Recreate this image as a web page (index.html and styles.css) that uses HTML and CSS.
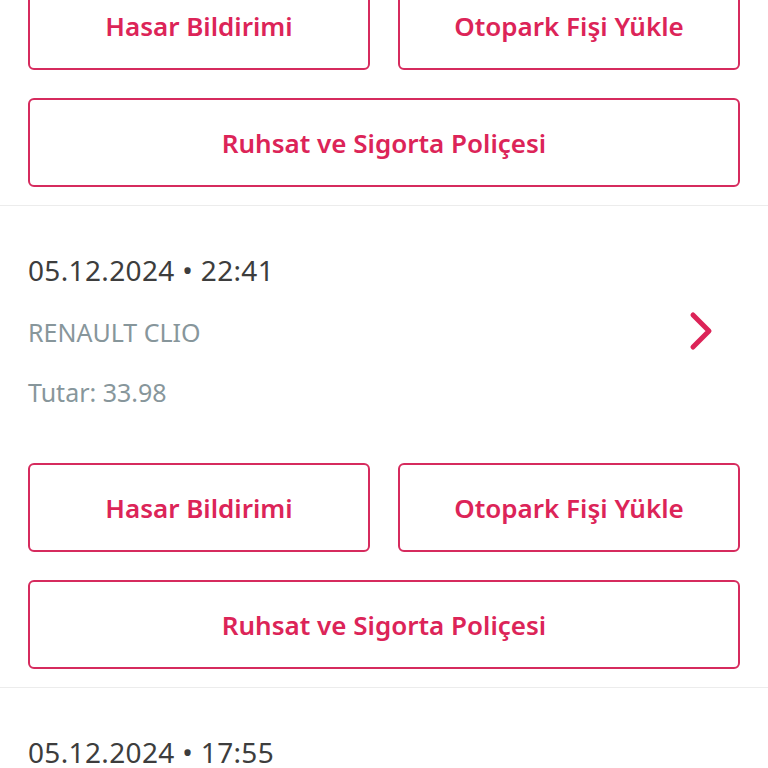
FILE: index.html
```html
<!DOCTYPE html>
<html lang="tr">
<head>
<meta charset="utf-8">
<title>Otopark</title>
<link rel="stylesheet" href="styles.css">
</head>
<body>
<div class="list">
  <section class="item item-partial">
    <div class="actions">
      <div class="row">
        <button class="btn">Hasar Bildirimi</button>
        <button class="btn">Otopark Fişi Yükle</button>
      </div>
      <button class="btn">Ruhsat ve Sigorta Poliçesi</button>
    </div>
  </section>
  <section class="item">
    <div class="head">
      <div class="info">
        <div class="date">05.12.2024 • 22:41</div>
        <div class="car">RENAULT CLIO</div>
        <div class="amount">Tutar: 33.98</div>
      </div>
      <svg class="chev" width="26" height="42" viewBox="0 0 26 42"><path d="M5 5 L21 21 L5 37" fill="none" stroke="#dc2458" stroke-width="5" stroke-linecap="round" stroke-linejoin="round"/></svg>
    </div>
    <div class="actions">
      <div class="row">
        <button class="btn">Hasar Bildirimi</button>
        <button class="btn">Otopark Fişi Yükle</button>
      </div>
      <button class="btn">Ruhsat ve Sigorta Poliçesi</button>
    </div>
  </section>
  <section class="item">
    <div class="head">
      <div class="info">
        <div class="date">05.12.2024 • 17:55</div>
      </div>
    </div>
  </section>
</div>
</body>
</html>
```
FILE: styles.css
```css
html, body {
  margin: 0;
  padding: 0;
  background: #ffffff;
  overflow: hidden;
}
body {
  font-family: "Noto Sans", "Open Sans", sans-serif;
  width: 768px;
  height: 768px;
}
.list {
  display: flex;
  flex-direction: column;
}
.item {
  padding: 48px 28px 18px;
  border-bottom: 1px solid #ececec;
}
.item-partial {
  margin-top: -19px;
  padding-top: 0;
}
.head {
  display: flex;
  align-items: center;
  justify-content: space-between;
  padding-right: 26px;
  margin-bottom: 56px;
}
.info {
  display: flex;
  flex-direction: column;
}
.date {
  font-size: 28px;
  line-height: 32px;
  letter-spacing: 0.35px;
  color: #3d3d3d;
  margin-bottom: 31px;
}
.car, .amount {
  font-size: 25px;
  line-height: 30px;
  color: #87969b;
}
.car {
  margin-bottom: 30px;
}
.actions {
  display: flex;
  flex-direction: column;
  gap: 28px;
}
.row {
  display: grid;
  grid-template-columns: 1fr 1fr;
  gap: 28px;
}
.btn {
  height: 89px;
  border: 2px solid #d62b5e;
  border-radius: 6px;
  background: #ffffff;
  color: #dc2458;
  font-family: "Noto Sans", "Open Sans", sans-serif;
  font-size: 26px;
  font-weight: 600;
  padding: 0;
}
```
